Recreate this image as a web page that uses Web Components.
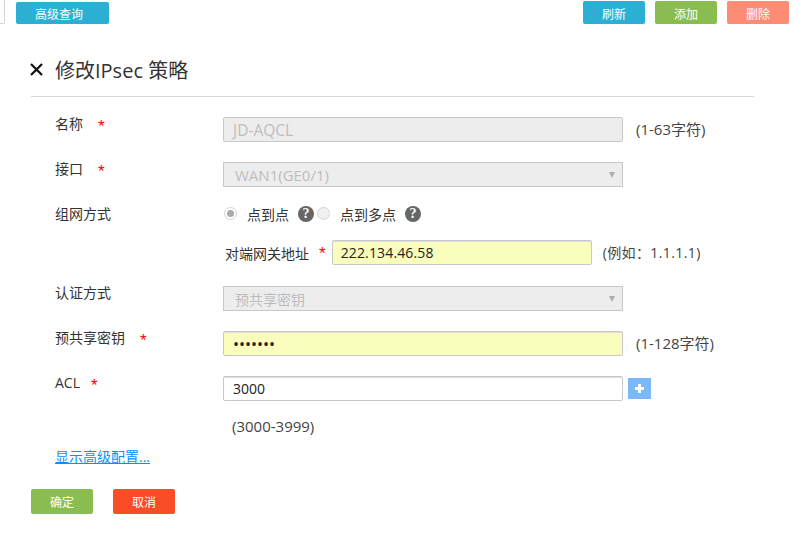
<!DOCTYPE html>
<html lang="zh">
<head>
<meta charset="utf-8">
<title>修改IPsec 策略</title>
<style>
    html, body {
        margin: 0;
        padding: 0;
        background: #fff;
        color: #333;
        font-family: 'Open Sans', 'Noto Sans CJK SC', sans-serif;
        font-size: 14px;
    }
</style>
</head>
<body>
<ipsec-page></ipsec-page>

<script>
class UiButton extends HTMLElement {
    connectedCallback() {
        this.attachShadow({ mode: 'open' });
        this.shadowRoot.innerHTML = `
            <style>
                :host {
                    display: flex;
                    align-items: center;
                    justify-content: center;
                    box-sizing: border-box;
                    width: 62px;
                    height: 25px;
                    border-radius: 2px;
                    color: #fff;
                    font-size: 12px;
                    background: var(--btn, #2bb0d4);
                }
            </style>
            <slot></slot>
        `;
    }
}

class TopBar extends HTMLElement {
    connectedCallback() {
        this.attachShadow({ mode: 'open' });
        this.shadowRoot.innerHTML = `
            <style>
                :host {
                    display: flex;
                    height: 24px;
                    align-items: flex-end;
                    padding-right: 12px;
                }
                .stub {
                    width: 5px;
                    height: 24px;
                    box-sizing: border-box;
                    border: 1px solid #d5d5d5;
                    border-left: 0;
                    border-top: 0;
                    border-radius: 0 0 2px 0;
                    margin-right: 11px;
                }
                .grow { flex: 1; }
                .right {
                    display: flex;
                    gap: 10px;
                }
                ui-button { height: 23px; padding-top: 2px; }
                .search { width: 93px; height: 22px; padding: 2px 7px 0 0; }
            </style>
            <div class="stub"></div>
            <ui-button class="search">高级查询</ui-button>
            <div class="grow"></div>
            <div class="right">
                <ui-button style="--btn:#2bb0d4">刷新</ui-button>
                <ui-button style="--btn:#8abd50">添加</ui-button>
                <ui-button style="--btn:#fd8c74">删除</ui-button>
            </div>
        `;
    }
}

class PanelTitle extends HTMLElement {
    connectedCallback() {
        this.attachShadow({ mode: 'open' });
        this.shadowRoot.innerHTML = `
            <style>
                :host {
                    display: flex;
                    align-items: center;
                    height: 73px;
                    margin: 0 47px 0 31px;
                    border-bottom: 1px solid #d8d8d8;
                    box-sizing: border-box;
                    font-size: 20px;
                    color: #333;
                    padding-top: 19px;
                }
                svg { margin: 0 12px 0 -1px; }
            </style>
            <svg width="13" height="13" viewBox="0 0 13 13">
                <path d="M1 1 L12 12 M12 1 L1 12" stroke="#111" stroke-width="2.2" fill="none"/>
            </svg>
            <slot></slot>
        `;
    }
}

class FormRow extends HTMLElement {
    connectedCallback() {
        const label = this.getAttribute('label') || '';
        const star = this.hasAttribute('required') ? '<span class="star">*</span>' : '';
        this.attachShadow({ mode: 'open' });
        this.shadowRoot.innerHTML = `
            <style>
                :host {
                    display: flex;
                    align-items: flex-start;
                    min-height: 25px;
                    padding-left: 55px;
                }
                .label {
                    width: 168px;
                    flex: none;
                    display: flex;
                    padding-top: var(--label-top, 0);
                    line-height: 14px;
                    color: #333;
                    white-space: pre;
                }
                .star {
                    color: #f00;
                    margin: 1px 0 0 var(--star-gap, 15px);
                    font-family: 'Liberation Sans', sans-serif;
                    font-size: 17px;
                    line-height: 18px;
                }
                .body {
                    display: flex;
                    align-items: center;
                }
            </style>
            <div class="label">${label}${star}</div>
            <div class="body"><slot></slot></div>
        `;
    }
}

class TextBox extends HTMLElement {
    connectedCallback() {
        this.attachShadow({ mode: 'open' });
        this.shadowRoot.innerHTML = `
            <style>
                :host {
                    display: flex;
                    align-items: center;
                    box-sizing: border-box;
                    width: var(--w, 400px);
                    height: 25px;
                    border: 1px solid #c8c8c8;
                    border-radius: 2px;
                    padding-left: 9px;
                    font-size: 14px;
                    color: #222;
                    background: #fff;
                    box-shadow: inset 0 1px 0 #ddd;
                    flex: none;
                    position: relative;
                }
                :host([filled]) { background: #fafebc; }
                :host([disabled]) {
                    background: #ededed;
                    color: #bdbdbd;
                    box-shadow: none;
                }
                :host([select]) { border-radius: 0; padding-left: 11px; }
                :host([select]) .arrow {
                    display: block;
                }
                .arrow {
                    display: none;
                    position: absolute;
                    right: 7px;
                    top: 9px;
                    width: 0;
                    height: 0;
                    border-left: 3px solid transparent;
                    border-right: 3px solid transparent;
                    border-top: 6px solid #adadad;
                }
            </style>
            <slot></slot>
            <i class="arrow"></i>
        `;
    }
}

class RadioOption extends HTMLElement {
    connectedCallback() {
        const on = this.hasAttribute('checked');
        this.attachShadow({ mode: 'open' });
        this.shadowRoot.innerHTML = `
            <style>
                :host {
                    display: inline-flex;
                    align-items: center;
                    height: 25px;
                }
                .dot {
                    width: 13px;
                    height: 13px;
                    box-sizing: border-box;
                    border: 1px solid #d4d4d4;
                    border-radius: 50%;
                    background: #f1f1f1;
                    display: flex;
                    align-items: center;
                    justify-content: center;
                    margin-right: 10px;
                    margin-left: 1px;
                }
                .dot.on { background: #fff; }
                .dot.on::after {
                    content: '';
                    width: 7px;
                    height: 7px;
                    border-radius: 50%;
                    background: #aaa;
                }
                .help {
                    width: 16px;
                    height: 16px;
                    border-radius: 50%;
                    background: #666;
                    color: #fff;
                    font-size: 14px;
                    font-weight: bold;
                    line-height: 16px;
                    text-align: center;
                    margin-left: 9px;
                    font-family: 'Liberation Serif', serif;
                }
            </style>
            <span class="dot ${on ? 'on' : ''}"></span>
            <slot></slot>
            <span class="help">?</span>
        `;
    }
}

class FieldHint extends HTMLElement {
    connectedCallback() {
        this.attachShadow({ mode: 'open' });
        this.shadowRoot.innerHTML = `
            <style>
                :host {
                    display: block;
                    margin: -2px 0 0 13px;
                    font-size: 15px;
                    color: #444;
                    white-space: nowrap;
                }
            </style>
            <slot></slot>
        `;
    }
}

class IpsecPage extends HTMLElement {
    connectedCallback() {
        this.attachShadow({ mode: 'open' });
        this.shadowRoot.innerHTML = `
            <style>
                :host { display: block; }
                form-row { margin-top: 20px; }
                .radios { display: flex; align-items: center; height: 25px; margin-top: -1px; }
                .radios radio-option + radio-option { margin-left: 2px; }
                .peer {
                    display: flex;
                    align-items: center;
                    height: 25px;
                    margin: 13px 0 0 225px;
                    white-space: nowrap;
                }
                .peer .star {
                    color: #f00;
                    font-family: 'Liberation Sans', sans-serif;
                    font-size: 17px;
                    margin: 3px 6px 0 10px;
                }
                .peer field-hint { margin-left: 11px; font-size: 14px; letter-spacing: .4px; }
                .plus {
                    width: 23px;
                    height: 21px;
                    background: #7ab8fb;
                    margin-left: 5px;
                    display: flex;
                    align-items: center;
                    justify-content: center;
                }
                .range {
                    margin: 15px 0 0 232px;
                    color: #444;
                    font-size: 15px;
                    line-height: 20px;
                }
                .more {
                    display: block;
                    margin: 11px 0 0 55px;
                    color: #0a8fff;
                    text-decoration: underline;
                    font-size: 14px;
                    line-height: 20px;
                }
                .actions {
                    display: flex;
                    gap: 20px;
                    margin: 22px 0 0 31px;
                }
            </style>
            <top-bar></top-bar>
            <panel-title>修改IPsec 策略</panel-title>
            <form-row label="名称" required>
                <text-box disabled style="font-size:15.5px">JD-AQCL</text-box>
                <field-hint>(1-63字符)</field-hint>
            </form-row>
            <form-row label="接口" required>
                <text-box disabled select style="font-size:15px">WAN1(GE0/1)</text-box>
            </form-row>
            <form-row label="组网方式" style="margin-top:15px;--label-top:5px">
                <div class="radios">
                    <radio-option checked>点到点</radio-option>
                    <radio-option>点到多点</radio-option>
                </div>
            </form-row>
            <div class="peer">
                对端网关地址<span class="star">*</span>
                <text-box filled style="--w:260px;letter-spacing:.15px;padding-left:8px">222.134.46.58</text-box>
                <field-hint>(例如：1.1.1.1)</field-hint>
            </div>
            <form-row label="认证方式" style="margin-top:21px">
                <text-box disabled select>预共享密钥</text-box>
            </form-row>
            <form-row label="预共享密钥" required>
                <text-box filled style="font-size:16px">•••••••</text-box>
                <field-hint>(1-128字符)</field-hint>
            </form-row>
            <form-row label="ACL" required style="--star-gap:11px">
                <text-box>3000</text-box>
                <div class="plus">
                    <svg width="11" height="11" viewBox="0 0 11 11">
                        <path d="M5.5 1 V10 M1 5.5 H10" stroke="#fff" stroke-width="3" fill="none"/>
                    </svg>
                </div>
            </form-row>
            <div class="range">(3000-3999)</div>
            <a class="more">显示高级配置...</a>
            <div class="actions">
                <ui-button style="--btn:#8abd50">确定</ui-button>
                <ui-button style="--btn:#f94d27">取消</ui-button>
            </div>
        `;
    }
}

customElements.define('ui-button', UiButton);
customElements.define('top-bar', TopBar);
customElements.define('panel-title', PanelTitle);
customElements.define('form-row', FormRow);
customElements.define('text-box', TextBox);
customElements.define('radio-option', RadioOption);
customElements.define('field-hint', FieldHint);
customElements.define('ipsec-page', IpsecPage);
</script>
</body>
</html>
